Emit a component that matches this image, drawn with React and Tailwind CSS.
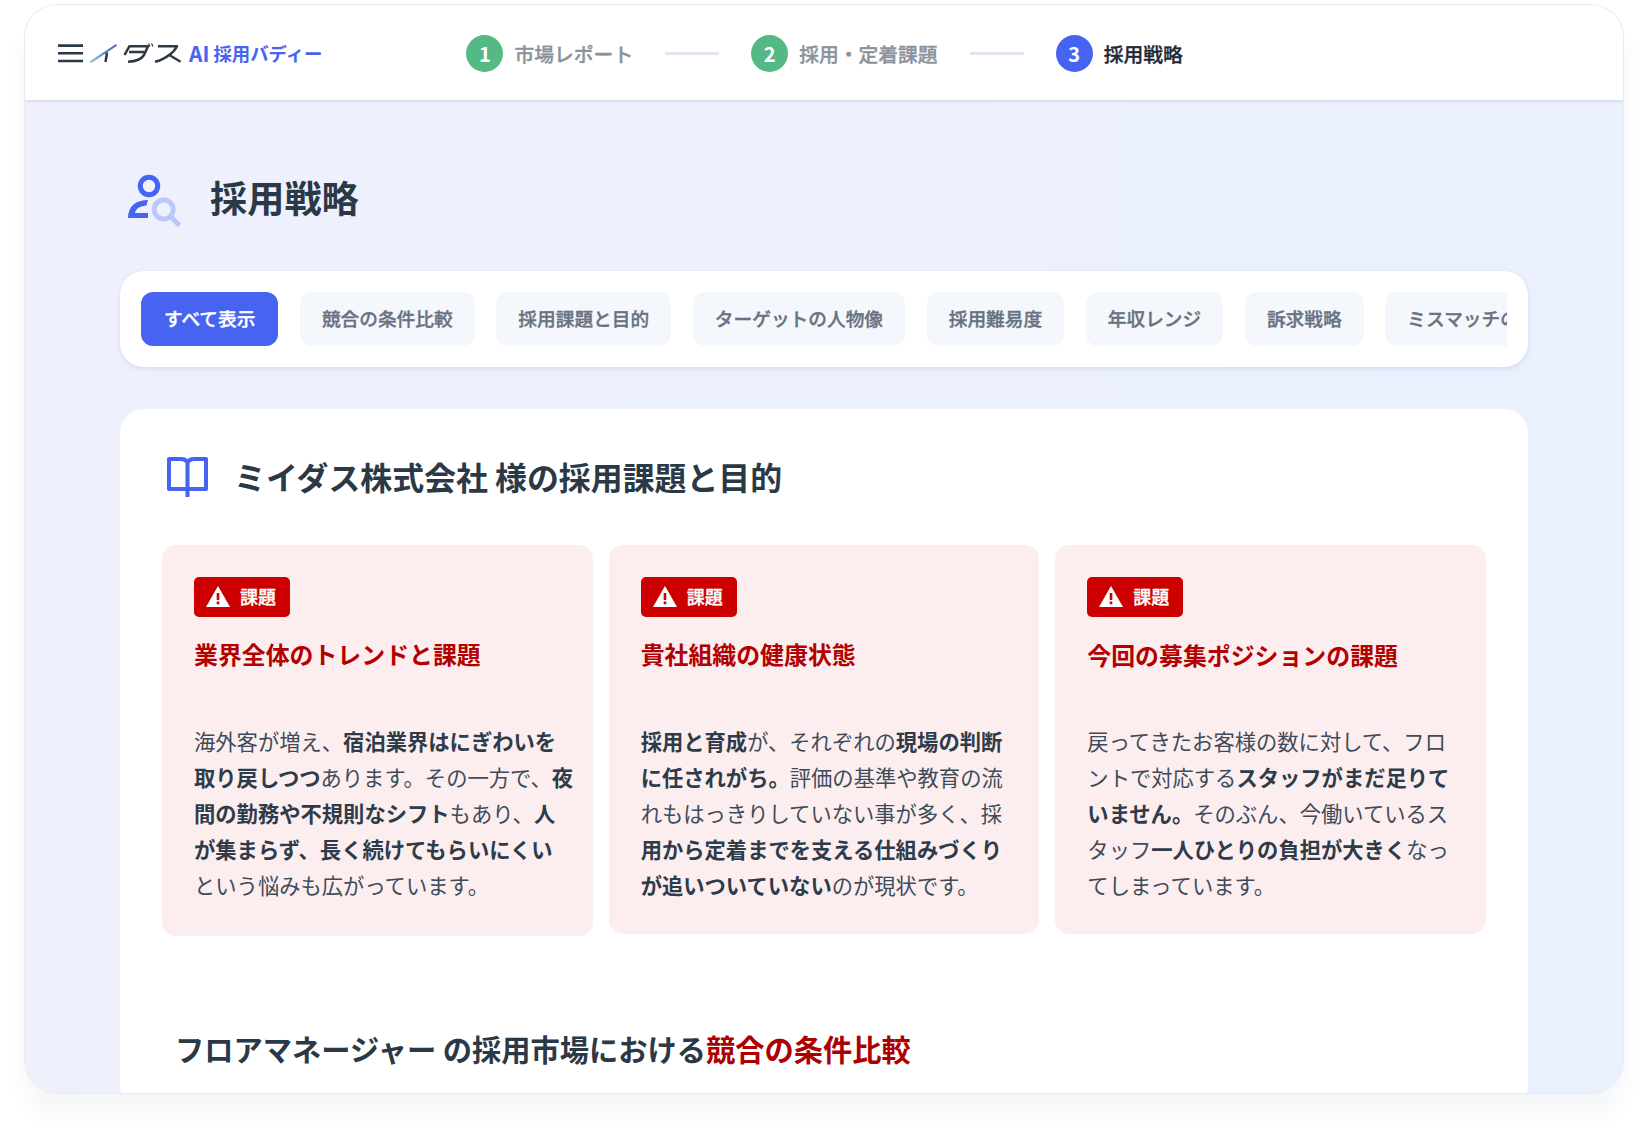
import React from 'react';

const BLUE = '#4664F0';

const Logo = () => (
  <svg width="124" height="21" viewBox="0 0 124 21" fill="none" className="shrink-0">
    <defs>
      <linearGradient id="slash" x1="0" y1="1" x2="1" y2="0">
        <stop offset="0" stopColor="#a9cfc0" />
        <stop offset="0.5" stopColor="#5f8fd8" />
        <stop offset="1" stopColor="#4a6aa8" />
      </linearGradient>
    </defs>
    <g stroke="#2B3947" strokeWidth="2.6">
      <path d="M0 2.6H25M0 10.2H25M0 18H25" />
    </g>
    <path d="M31 18.8 L58 1 L59 2.8 L33.5 20Z" fill="url(#slash)" />
    <g stroke="#2B3947" strokeWidth="2.5" strokeLinejoin="round">
      <path d="M49 9.5 L47.5 19" />
      <path d="M66.5 12 L71.5 3.2 H90 L86 12 Q82.5 18 70 18.8" />
      <path d="M71 9 H86.5" />
      <path d="M90.5 0.5 L92 3.5 M93.5 0.5 L95 3.5" strokeWidth="1.2" />
      <path d="M100 3.2 H119 Q116 9 111 12 Q105 17 97 18.8" />
      <path d="M110.5 11.5 L122.5 18.8" />
    </g>
  </svg>
);

const Step = ({ n, label, color, active }) => (
  <div className="flex items-center gap-[11px]">
    <div
      className={`flex h-[37px] w-[37px] items-center justify-center rounded-full text-[20px] font-bold text-white ${color}`}
    >
      {n}
    </div>
    <span
      className={`text-[19.8px] font-medium [-webkit-text-stroke:0.35px_currentColor] ${active ? 'text-[#1F2937]' : 'text-[#8A929C]'}`}
    >
      {label}
    </span>
  </div>
);

const StepLine = () => <div className="mx-[32px] h-[3px] w-[54px] bg-[#E1E5EF]" />;

const PersonSearch = () => (
  <svg width="56" height="54" viewBox="127 174 56 54" fill="none" className="ml-[7px] mt-[4px] shrink-0">
    <circle cx="149" cy="186" r="8.7" stroke={BLUE} strokeWidth="5" />
    <path d="M148 200 C136 200 128 206 128 218 H148 V213 H135 C136 208 141 206 146.5 205.5 Z" fill={BLUE} />
    <circle cx="163.7" cy="209.5" r="9.5" stroke="#B9C7FB" strokeWidth="4.8" />
    <path d="M170.5 216.5 L179.5 225.5" stroke="#B9C7FB" strokeWidth="4.8" />
  </svg>
);

const BookIcon = () => (
  <svg width="44" height="42" viewBox="166 456 44 42" fill="none" className="ml-[4px] shrink-0">
    <path
      d="M169 459 H181 Q186 459 187.5 463 Q189 459 194 459 H206 V489 H169 Z M187.5 463 V497"
      stroke={BLUE}
      strokeWidth="4"
      strokeLinejoin="round"
    />
  </svg>
);

const WarnIcon = () => (
  <svg width="24" height="21" viewBox="0 0 24 21" className="mb-[2px] shrink-0">
    <path d="M12 0 L24 21 H0 Z" fill="#fff" />
    <rect x="10.7" y="7" width="2.6" height="7" fill="#CC0000" />
    <rect x="10.7" y="15.5" width="2.6" height="2.8" fill="#CC0000" />
  </svg>
);

const tabs = ['すべて表示', '競合の条件比較', '採用課題と目的', 'ターゲットの人物像', '採用難易度', '年収レンジ', '訴求戦略', 'ミスマッチの防止策'];

const B = ({ children }) => <b className="font-bold text-[#2D3B4A]">{children}</b>;

const cards = [
  {
    title: '業界全体のトレンドと課題',
    h: 'h-[391px]',
    tm: 'mt-[19px] h-[36px]',
    body: (
      <>
        海外客が増え、<B>宿泊業界はにぎわいを</B>
        <br />
        <B>取り戻しつつ</B>あります。その一方で、<B>夜</B>
        <br />
        <B>間の勤務や不規則なシフト</B>もあり、<B>人</B>
        <br />
        <B>が集まらず、長く続けてもらいにくい</B>
        <br />
        という悩みも広がっています。
      </>
    ),
  },
  {
    title: '貴社組織の健康状態',
    h: 'h-[389px]',
    tm: 'mt-[19px] h-[36px]',
    body: (
      <>
        <B>採用と育成</B>が、それぞれの<B>現場の判断</B>
        <br />
        <B>に任されがち。</B>評価の基準や教育の流
        <br />
        れもはっきりしていない事が多く、採
        <br />
        <B>用から定着までを支える仕組みづくり</B>
        <br />
        <B>が追いついていない</B>のが現状です。
      </>
    ),
  },
  {
    title: '今回の募集ポジションの課題',
    h: 'h-[389px]',
    tm: 'mt-[20px] h-[35px]',
    body: (
      <>
        戻ってきたお客様の数に対して、フロ
        <br />
        ントで対応する<B>スタッフがまだ足りて</B>
        <br />
        <B>いません。</B>そのぶん、今働いているス
        <br />
        タッフ<B>一人ひとりの負担が大きく</B>なっ
        <br />
        てしまっています。
      </>
    ),
  },
];

function App() {
  return (
    <div className="h-[1138px] w-full overflow-hidden bg-white pl-[25px] pt-[5px] font-['Noto_Sans_CJK_JP','Noto_Sans',sans-serif]">
      <div className="flex h-[1088px] w-[1598px] flex-col overflow-hidden rounded-[32px] bg-linear-to-r from-[#F0F0FD] to-[#EAF0FE] shadow-[0_22px_22px_rgba(30,35,60,0.045)] ring-1 ring-[#E8EAF2]">
        <header className="flex h-[95px] shrink-0 items-center bg-white pl-[33px] pt-[2px] shadow-[0_1px_3px_rgba(60,80,130,0.2)]">
          <Logo />
          <span className="ml-[7px] flex items-center text-[18.4px] font-bold text-[#4664F0]">
            <span className="mr-[4px] text-[21px]">AI</span>採用バディー
          </span>
          <div className="ml-[144px] flex items-center">
            <Step n="1" label="市場レポート" color="bg-[#55B985]" />
            <StepLine />
            <Step n="2" label="採用・定着課題" color="bg-[#55B985]" />
            <StepLine />
            <Step n="3" label="採用戦略" color="bg-[#4664F0]" active />
          </div>
        </header>

        <main className="flex-1 overflow-hidden pl-[95px] pr-[95px] pt-[73px]">
          <div className="mb-[46px] flex h-[52px] items-center">
            <PersonSearch />
            <h1 className="-mt-[2px] ml-[27px] text-[37.2px] font-bold text-[#2B3947]">採用戦略</h1>
          </div>

          <div className="h-[96px] rounded-[24px] bg-white py-[21px] pl-[21px] pr-[21px] shadow-[0_2px_5px_rgba(70,90,150,0.14)]">
            <div className="flex gap-[21.3px] overflow-hidden">
              {tabs.map((t, i) => (
                <div
                  key={t}
                  className={`flex h-[54px] shrink-0 items-center rounded-[12px] pb-[2px] text-[18.7px] font-medium [-webkit-text-stroke:0.35px_currentColor] ${
                    i === 0 ? 'bg-[#4664F0] px-[23px] text-white' : 'bg-[#F4F7FC] px-[22.2px] text-[#687280]'
                  }`}
                >
                  {t}
                </div>
              ))}
            </div>
          </div>

          <section className="mt-[42px] h-[700px] rounded-[24px] bg-white px-[42px] pt-[48px]">
            <div className="mb-[48px] flex h-[40px] items-center">
              <BookIcon />
              <h2 className="ml-[24px] text-[31.9px] font-bold text-[#2B3947]">ミイダス株式会社 様の採用課題と目的</h2>
            </div>

            <div className="grid grid-cols-3 items-start gap-[16px]">
              {cards.map((c) => (
                <div key={c.title} className={`rounded-[14px] bg-[#FCEEEE] pl-[32px] pt-[32px] ${c.h}`}>
                  <div className="flex h-[40px] w-[96px] items-center gap-[10px] rounded-[5px] bg-[#CC0000] pl-[12px] text-[18px] font-medium text-white">
                    <WarnIcon />
                    <span className="pb-[2px] [-webkit-text-stroke:0.3px_currentColor]">課題</span>
                  </div>
                  <h3 className={`${c.tm} text-[23.9px] font-bold leading-[36px] text-[#B30000]`}>{c.title}</h3>
                  <p className="mt-[51px] whitespace-nowrap text-[21.3px] leading-[36px] text-[#3D4B5A]">{c.body}</p>
                </div>
              ))}
            </div>

            <h2 className="mt-[92px] pl-[13px] text-[29.25px] font-bold leading-[40px] text-[#2B3947]">
              フロアマネージャー の採用市場における<span className="text-[#AD0000]">競合の条件比較</span>
            </h2>
          </section>
        </main>
      </div>
    </div>
  );
}

export default App;
